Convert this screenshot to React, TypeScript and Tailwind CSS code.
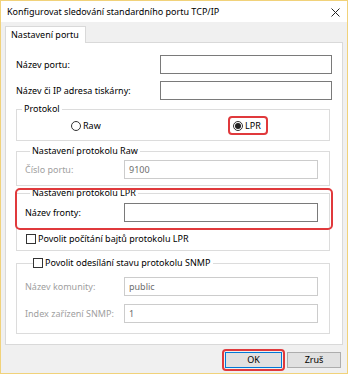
import React from "react";

const font = { fontFamily: '"Segoe UI", "Noto Sans", "Open Sans", sans-serif' };

function Input({ value = "", disabled = false, w = "w-[194px]" }: { value?: string; disabled?: boolean; w?: string }) {
  return (
    <div
      className={`${w} h-[19px] flex items-center px-[4px] text-[9px] ${
        disabled ? "border border-[#cccccc] text-[#6d6d6d] bg-white" : "border border-[#7a7a7a] bg-white text-black"
      }`}
    >
      {value}
    </div>
  );
}

function Checkbox() {
  return <div className="w-[10px] h-[10px] border border-[#333333] bg-white shrink-0" />;
}

export default function App() {
  return (
    <div style={font} className="w-[348px] h-[374px] border border-[#f1d27a] flex flex-col text-[9px] leading-[12px] text-black overflow-hidden">
      {/* title bar */}
      <div className="h-[21px] bg-white flex items-center justify-between pl-[6px] pr-[7px] shrink-0">
        <span className="text-[9px]">Konfigurovat sledování standardního portu TCP/IP</span>
        <svg width="9" height="9" viewBox="0 0 9 9" className="mt-[1px]">
          <path d="M0.5 0.5 L8.5 8.5 M8.5 0.5 L0.5 8.5" stroke="#222" strokeWidth="1" />
        </svg>
      </div>
      {/* body */}
      <div className="flex-1 bg-[#f0f0f0] flex flex-col px-[4px] pt-[4px]">
        <div className="flex">
          <div className="h-[17px] whitespace-nowrap bg-white border border-b-0 border-[#d9d9d9] pl-[5px] pr-[6px] flex items-center -mb-px relative z-10">
            Nastavení portu
          </div>
        </div>
        <div className="h-[303px] bg-white border border-[#d9d9d9] flex flex-col pl-[10px] pr-[10px] pt-[12px] relative">
          <div className="flex items-center justify-between">
            <span>Název portu:</span>
            <Input w="w-[172px]" />
          </div>
          <div className="flex items-center justify-between mt-[7px]">
            <span>Název či IP adresa tiskárny:</span>
            <Input w="w-[172px]" />
          </div>

          {/* Protokol */}
          <fieldset className="mt-[3px] w-[314px] border border-[#dcdcdc] pb-[8px] pt-[5px]">
            <legend className="ml-[5px] px-[2px] h-[12px] leading-[12px]">Protokol</legend>
            <div className="flex items-center pl-[54px] h-[12px]">
              <div className="w-[162px] flex items-center gap-[2px]">
                <div className="w-[10px] h-[10px] rounded-full border border-[#333333] bg-white" />
                <span>Raw</span>
              </div>
              <div className="flex items-center gap-[2px] relative">
                <div className="w-[10px] h-[10px] rounded-full border border-[#333333] bg-white flex items-center justify-center">
                  <div className="w-[6px] h-[6px] rounded-full bg-[#222222]" />
                </div>
                <span>LPR</span>
                <div className="absolute left-[-5px] top-[-4px] w-[40px] h-[19px] border-2 border-[#e0393c] rounded-[4px]" />
              </div>
            </div>
          </fieldset>

          {/* Raw */}
          <fieldset className="mt-[4px] w-[314px] border border-[#dcdcdc] pt-[3px] pb-[6px] pl-[8px] pr-[11px]">
            <legend className="ml-[5px] px-[2px] h-[12px] leading-[12px]">Nastavení protokolu Raw</legend>
            <div className="flex items-center justify-between">
              <span className="text-[#a0a0a0]">Číslo portu:</span>
              <Input value="9100" disabled />
            </div>
          </fieldset>

          {/* LPR */}
          <fieldset className="mt-[1px] w-[314px] border border-[#dcdcdc] pt-[4px] pb-[5px] pl-[8px] pr-[11px] relative">
            <legend className="ml-[5px] px-[2px] h-[12px] leading-[12px]">Nastavení protokolu LPR</legend>
            <div className="flex items-center justify-between">
              <span>Název fronty:</span>
              <Input />
            </div>
            <div className="flex items-center gap-[2px] mt-[11px] pl-[1px] h-[12px]">
              <Checkbox />
              <span>Povolit počítání bajtů protokolu LPR</span>
            </div>
          </fieldset>
          <div className="absolute left-[9px] top-[145px] w-[318px] h-[42px] border-2 border-[#e0393c] rounded-[5px] pointer-events-none" />

          {/* SNMP */}
          <fieldset className="mt-[6px] w-[314px] border border-[#dcdcdc] pt-[8px] pb-[10px] pl-[8px] pr-[11px]">
            <legend className="ml-[8px] pr-[3px] h-[12px] leading-[12px] flex items-center gap-[2px]">
              <Checkbox />
              <span>Povolit odesílání stavu protokolu SNMP</span>
            </legend>
            <div className="flex items-center justify-between">
              <span className="text-[#a0a0a0]">Název komunity:</span>
              <Input value="public" disabled />
            </div>
            <div className="flex items-center justify-between mt-[8px]">
              <span className="text-[#a0a0a0]">Index zařízení SNMP:</span>
              <Input value="1" disabled />
            </div>
          </fieldset>
        </div>

        {/* buttons */}
        <div className="flex justify-end gap-[5px] mt-[7px] pr-[2px]">
          <div className="relative">
            <div className="w-[57px] h-[16px] bg-[#e1e1e1] border border-[#0078d7] flex items-center justify-center">OK</div>
            <div className="absolute -left-[3px] -top-[3px] w-[63px] h-[22px] border-2 border-[#e0393c] rounded-[4px]" />
          </div>
          <div className="w-[54px] h-[16px] bg-[#e1e1e1] border border-[#adadad] flex items-center justify-center">Zruš</div>
        </div>
      </div>
    </div>
  );
}
